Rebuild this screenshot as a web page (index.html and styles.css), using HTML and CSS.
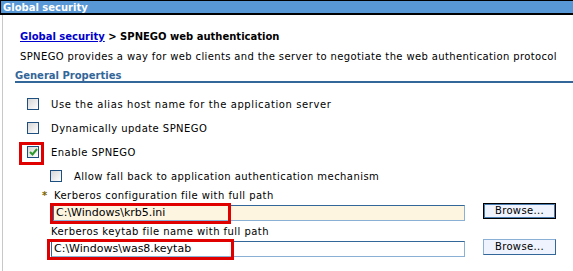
FILE: index.html
```html
<!DOCTYPE html>
<html lang="en">

<head>
    <meta charset="UTF-8">
    <title>SPNEGO web authentication</title>
    <link rel="stylesheet" href="styles.css">
</head>

<body>

    <!-- Title bar -->
    <div class="titlebar">Global security</div>

    <div class="page">
        <div class="crumb"><a href="#">Global security</a> &gt; SPNEGO web authentication</div>
        <p class="desc">SPNEGO provides a way for web clients and the server to negotiate the web authentication protocol</p>
        <div class="section">General Properties</div>

        <div class="props">
            <div class="check">
                <span class="box"></span>
                <span class="wide">Use the alias host name for the application server</span>
            </div>
            <div class="check">
                <span class="box"></span>
                <span>Dynamically update SPNEGO</span>
            </div>
            <div class="check">
                <span class="box">
                    <svg width="9" height="8" viewBox="0 0 9 8"><path d="M1 4 L3.5 6.5 L8 1" fill="none" stroke="#2e9a2e" stroke-width="2"/></svg>
                    <span class="mark mark-box"></span>
                </span>
                <span>Enable SPNEGO</span>
            </div>
            <div class="check sub">
                <span class="box"></span>
                <span>Allow fall back to application authentication mechanism</span>
            </div>

            <!-- Kerberos files -->
            <div class="field first">
                <div class="flabel"><span class="star">*</span>Kerberos configuration file with full path</div>
                <div class="frow">
                    <div class="input cream">C:\Windows\krb5.ini<span class="mark mark-in1"></span></div>
                    <div class="btn focus">Browse...</div>
                </div>
            </div>
            <div class="field second">
                <div class="flabel">Kerberos keytab file name with full path</div>
                <div class="frow">
                    <div class="input">C:\Windows\was8.keytab<span class="mark mark-in2"></span></div>
                    <div class="btn">Browse...</div>
                </div>
            </div>
        </div>
    </div>

</body>

</html>
```

FILE: styles.css
```css
body {
    margin: 0;
    width: 573px;
    height: 271px;
    overflow: hidden;
    background-color: white;
    font-family: "DejaVu Sans", Verdana, sans-serif;
    font-size: 10px;
    letter-spacing: 0.45px;
    color: #000;
}

.titlebar {
    height: 11px;
    padding: 1px 0 0 2px;
    line-height: 12px;
    background-color: #5898d6;
    border-top: 1px solid #000;
    border-left: 1px solid #000;
    border-bottom: 2px solid #000;
    color: white;
    font-weight: bold;
    letter-spacing: 0;
}

.page {
    box-sizing: border-box;
    margin-left: 2px;
    height: 256px;
    border-left: 1px solid #c8c8c8;
    padding-top: 16px;
}

.crumb {
    margin-left: 17px;
    font-weight: bold;
    line-height: 12px;
    letter-spacing: 0;
}

.crumb a {
    color: #0000cc;
}

.desc {
    margin: 8px 0 0 17px;
    line-height: 12px;
    letter-spacing: 0.37px;
}

.section {
    margin: 7px 0 0 12px;
    border-bottom: 2px solid #336699;
    color: #336699;
    font-weight: bold;
    line-height: 11px;
    letter-spacing: 0;
}

.props {
    padding-top: 15px;
}

.check {
    display: flex;
    align-items: center;
    height: 12px;
    margin: 0 0 12px 24px;
}

.check.sub {
    margin-left: 47px;
    margin-bottom: 0;
}

.wide {
    letter-spacing: 0.6px;
}

.box {
    position: relative;
    display: flex;
    align-items: center;
    justify-content: center;
    width: 10px;
    height: 10px;
    margin-right: 12px;
    border: 1px solid #1d4f80;
    background: linear-gradient(135deg, #d6d6d6, #ffffff);
}

.mark {
    position: absolute;
    border: 3px solid #e00000;
}

.mark-box {
    left: -9px;
    top: -5px;
    width: 19px;
    height: 17px;
}

.field.first {
    margin: 8px 0 0 39px;
}

.field.second {
    margin: 5px 0 0 48px;
}

.flabel {
    line-height: 12px;
}

.star {
    display: inline-block;
    width: 12px;
    color: #7a6400;
    font-weight: bold;
    letter-spacing: 0;
}

.frow {
    display: flex;
    align-items: flex-start;
    margin-top: 1px;
}

.field.first .frow {
    margin-left: 11px;
}

.input {
    position: relative;
    box-sizing: border-box;
    height: 16px;
    margin-top: 2px;
    padding-left: 2px;
    line-height: 14px;
    font-size: 11px;
    letter-spacing: 0;
    border: 1px solid #8bb0d6;
    border-top-color: #336699;
    border-left-color: #336699;
    background-color: white;
}

.field.first .input {
    width: 412px;
}

.field.second .input {
    width: 414px;
}

.input.cream {
    background-color: #fdf5e0;
}

.mark-in1 {
    left: -4px;
    top: -3px;
    width: 175px;
    height: 15px;
}

.mark-in2 {
    left: -5px;
    top: -3px;
    width: 181px;
    height: 15px;
}

.btn {
    box-sizing: border-box;
    width: 73px;
    height: 16px;
    margin-left: 18px;
    line-height: 14px;
    text-align: center;
    letter-spacing: 0.35px;
    border: 1px solid #336699;
    border-top-color: #8bb0d6;
    border-left-color: #8bb0d6;
    background-color: #eef3fd;
}

.btn.focus {
    border: 1px solid #000;
    box-shadow: inset 0 0 0 1px #4a7cb0;
}
```
